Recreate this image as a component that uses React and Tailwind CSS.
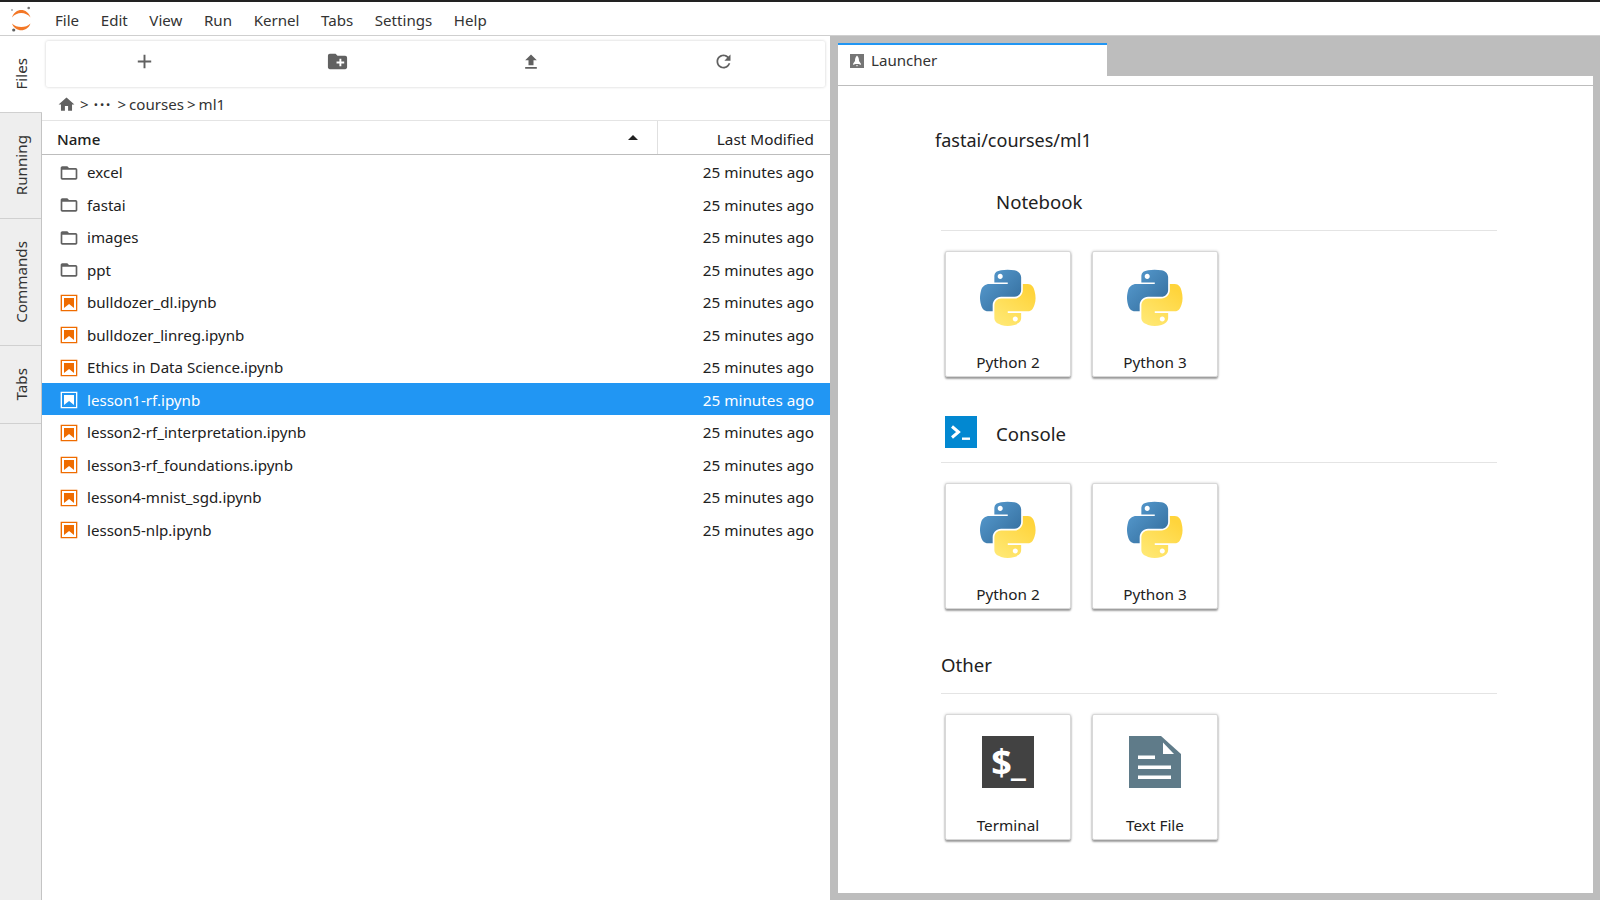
import { useId } from "react";

const folders = ["excel", "fastai", "images", "ppt"];
const notebooks = [
  "bulldozer_dl.ipynb",
  "bulldozer_linreg.ipynb",
  "Ethics in Data Science.ipynb",
  "lesson1-rf.ipynb",
  "lesson2-rf_interpretation.ipynb",
  "lesson3-rf_foundations.ipynb",
  "lesson4-mnist_sgd.ipynb",
  "lesson5-nlp.ipynb",
];

function Glyph({ d, className }) {
  return (
    <svg viewBox="0 0 24 24" className={className} fill="currentColor">
      <path d={d} />
    </svg>
  );
}

function FolderIcon() {
  return (
    <Glyph
      className="w-[20px] h-[20px] text-[#616161]"
      d="M20 6h-8l-2-2H4c-1.1 0-1.99.9-1.99 2L2 18c0 1.1.9 2 2 2h16c1.1 0 2-.9 2-2V8c0-1.1-.9-2-2-2zm0 12H4V8h16v10z"
    />
  );
}

function NotebookIcon({ selected }) {
  return (
    <svg viewBox="0 0 22 22" className="w-[20px] h-[20px]" fill={selected ? "#ffffff" : "#EF6C00"}>
      <path d="M18.7 3.3v15.4H3.3V3.3h15.4m1.5-1.5H1.8v18.3h18.3l.1-18.3z" />
      <path d="M16.5 16.5l-5.4-4.3-5.6 4.3v-11h11z" />
    </svg>
  );
}

function PythonIcon() {
  const id = useId();
  return (
    <svg viewBox="0 0 112 113" className="w-[56px] h-[58px]">
      <defs>
        <linearGradient id={id + "b"} x1="0" y1="0" x2="1" y2="1">
          <stop offset="0" stopColor="#5A9FD4" />
          <stop offset="1" stopColor="#306998" />
        </linearGradient>
        <linearGradient id={id + "y"} x1="0.2" y1="1" x2="0.8" y2="0.1">
          <stop offset="0" stopColor="#FFE873" />
          <stop offset="1" stopColor="#FFD43B" />
        </linearGradient>
      </defs>
      <path
        fill={`url(#${id}b)`}
        d="M54.918785,9.1927421e-4 C50.335132,0.02221727 45.957846,0.41313697 42.106285,1.0946693 C30.760069,3.0991731 28.700036,7.2947714 28.700035,15.032169 L28.700035,25.250919 L55.512535,25.250919 L55.512535,28.657169 L28.700035,28.657169 L18.637535,28.657169 C10.845187,28.657169 4.0217715,33.340702 1.8875353,42.250919 C-0.57424527,52.463655 -0.68204673,58.836362 1.8875353,69.500919 C3.7934572,77.438451 8.3450765,83.094669 16.137535,83.094669 L25.356285,83.094669 L25.356285,70.844669 C25.356285,61.994603 33.013429,54.188414 42.106285,54.188414 L68.887535,54.188414 C76.342298,54.188414 82.293783,48.050379 82.293785,40.563664 L82.293785,15.032169 C82.293785,7.7658669 76.163762,2.3073089 68.887535,1.0946693 C64.281548,0.32794397 59.502438,-0.02055893 54.918785,9.1927421e-4 z M40.418785,8.2196194 C43.188319,8.2196194 45.450035,10.518214 45.450035,13.344619 C45.450035,16.160962 43.188319,18.438369 40.418785,18.438369 C37.63923,18.438369 35.387535,16.160962 35.387535,13.344619 C35.387535,10.518214 37.63923,8.2196194 40.418785,8.2196194 z"
      />
      <path
        fill={`url(#${id}y)`}
        d="M85.637535,28.657169 L85.637535,40.563419 C85.637535,49.794016 77.811758,57.563419 68.887535,57.563419 L42.106285,57.563419 C34.770589,57.563419 28.700035,63.841866 28.700035,71.188419 L28.700035,96.719669 C28.700035,103.98597 35.018763,108.25994 42.106285,110.34467 C50.593331,112.84015 58.731102,113.29112 68.887535,110.34467 C75.63815,108.38952 82.293785,104.45499 82.293785,96.719669 L82.293785,86.500919 L55.512535,86.500919 L55.512535,83.094669 L82.293785,83.094669 L95.699785,83.094669 C103.49213,83.094669 106.39576,77.659386 109.10598,69.500919 C111.90547,61.102 111.78678,53.02 109.10598,42.250919 C107.17983,34.496 103.50126,28.657169 95.699785,28.657169 L85.637535,28.657169 z M70.575035,93.313419 C73.354589,93.313419 75.606285,95.590826 75.606285,98.407169 C75.606285,101.23357 73.354589,103.53217 70.575035,103.53217 C67.805501,103.53217 65.543785,101.23357 65.543785,98.407169 C65.543785,95.590826 67.805501,93.313419 70.575035,93.313419 z"
      />
    </svg>
  );
}

function TerminalIcon() {
  return (
    <div className="mt-[4px] w-[52px] h-[52px] bg-[#424242] flex items-center justify-center text-white font-bold text-[36px] leading-none tracking-[-1px] font-['Open_Sans',sans-serif]">
      $_
    </div>
  );
}

function TextFileIcon() {
  return (
    <svg viewBox="0 0 52 52" className="mt-[4px] w-[52px] h-[52px]">
      <path fill="#5f7b89" d="M0 0h32l20 18v34H0z" />
      <path fill="#ffffff" d="M34 6.5 L34 18 L45 18 z" />
      <path fill="#ffffff" d="M9 19.5h17v3.5H9zM9 29.5h33V33H9zM9 39.5h33V43H9z" />
    </svg>
  );
}

function Card({ label, children }) {
  return (
    <div className="w-[126px] h-[126px] bg-white rounded-[2px] border border-[#d8d8d8] shadow-[0_2px_2px_rgba(0,0,0,0.35),0_0_3px_rgba(0,0,0,0.2)] flex flex-col items-center">
      <div className="h-[83px] mt-[17px] flex justify-center">{children}</div>
      <div className="text-[15.3px] leading-5 text-[#212121]">{label}</div>
    </div>
  );
}

function Section({ title, icon, children }) {
  return (
    <div className="mb-[25.5px]">
      <div className="h-[60px] border-b border-[#e4e4e4] flex items-center">
        {icon ? <div className="ml-[4px] w-[51px]">{icon}</div> : null}
        {title === "Notebook" ? <div className="w-[55px]" /> : null}
        <span className="text-[18.6px] text-[#212121] mt-[3px]">{title}</span>
      </div>
      <div className="flex gap-[21px] pt-[20px] pl-[4px]">{children}</div>
    </div>
  );
}

function ConsoleIcon() {
  return (
    <svg viewBox="0 0 32 32" className="w-[32px] h-[32px]">
      <path fill="#0288D1" d="M0 0h32v32H0z" />
      <path fill="none" stroke="#ffffff" strokeWidth="3" d="M7 10.5 L13.5 16 L7 21.5" />
      <path fill="#ffffff" d="M17 21.5h8v2.4h-8z" />
    </svg>
  );
}

function SideTab({ label, active, className }) {
  return (
    <div
      className={
        "flex items-center justify-center pl-[1px] border-b border-[#d0d0d0] " +
        (active ? "bg-white w-[42px] " : "bg-[#eeeeee] w-[41px] ") +
        className
      }
    >
      <span className="[writing-mode:vertical-rl] rotate-180 text-[15.2px] text-[#333]">{label}</span>
    </div>
  );
}

function FileRow({ name, selected, icon }) {
  return (
    <div
      className={
        "h-[32.5px] flex items-center pt-[3px] pr-[16px] text-[15.1px] " +
        (selected ? "bg-[#2196f3] text-white" : "text-[#212121]")
      }
    >
      <div className="w-[45px] pl-[17px] flex items-center">{icon}</div>
      <span className="flex-1">{name}</span>
      <span className="text-[15.3px]">25 minutes ago</span>
    </div>
  );
}

export default function App() {
  return (
    <div className="h-screen w-full overflow-hidden flex flex-col bg-white border-t-2 border-[#222] font-['Noto_Sans',sans-serif]">
      {/* menu */}
      <div className="h-[34px] shrink-0 flex items-center pt-[3px] border-b border-[#cfcfcf] text-[15.1px] text-[#333]">
        <div className="w-[41px] mr-[14px] flex justify-center">
          <svg viewBox="0 0 24 28" className="w-[24px] h-[28px]">
            <path fill="#F37726" d="M3 11.5 C6 1.5 18.5 1.5 21.5 11.5 C17 5.5 7.5 5.5 3 11.5 z" />
            <path fill="#F37726" d="M3 17.5 C6 26.5 18.5 26.5 21.5 17.5 C17 22.2 7.5 22.2 3 17.5 z" />
            <circle cx="19.7" cy="2" r="1.3" fill="#767677" />
            <circle cx="3" cy="4" r="0.9" fill="#9e9e9e" />
            <circle cx="4.7" cy="24" r="1.6" fill="#616262" />
          </svg>
        </div>
        <div className="flex gap-[21.6px]">
          {["File", "Edit", "View", "Run", "Kernel", "Tabs", "Settings", "Help"].map((m) => (
            <span key={m}>{m}</span>
          ))}
        </div>
      </div>

      <div className="flex-1 flex min-h-0">
        {/* left tabs */}
        <div className="w-[42px] shrink-0 bg-[#eeeeee] border-r border-[#c4c4c4] flex flex-col">
          <SideTab label="Files" active className="h-[77px]" />
          <SideTab label="Running" className="h-[106px]" />
          <SideTab label="Commands" className="h-[127px]" />
          <SideTab label="Tabs" className="h-[78px]" />
        </div>

        {/* file browser */}
        <div className="w-[788px] shrink-0 flex flex-col bg-white">
          <div className="h-[46px] mt-[5px] ml-[4px] mr-[5px] pl-[2px] pb-[5px] flex items-center bg-white rounded-[2px] shadow-[0_0_3px_rgba(0,0,0,0.2)] text-[#616161]">
            <div className="w-[193px] flex justify-center">
              <Glyph className="w-[23px] h-[23px]" d="M19 13h-6v6h-2v-6H5v-2h6V5h2v6h6v2z" />
            </div>
            <div className="w-[193px] flex justify-center">
              <Glyph
                className="w-[23px] h-[23px]"
                d="M20 6h-8l-2-2H4c-1.11 0-1.99.89-1.99 2L2 18c0 1.11.89 2 2 2h16c1.11 0 2-.89 2-2V8c0-1.11-.89-2-2-2zm-1 8h-3v3h-2v-3h-3v-2h3V9h2v3h3v2z"
              />
            </div>
            <div className="w-[193px] flex justify-center">
              <Glyph className="w-[20px] h-[20px]" d="M9 16h6v-6h4l-7-7-7 7h4zm-4 2h14v2H5z" />
            </div>
            <div className="w-[193px] flex justify-center">
              <Glyph
                className="w-[21px] h-[21px]"
                d="M17.65 6.35C16.2 4.9 14.21 4 12 4c-4.42 0-7.99 3.58-7.99 8s3.57 8 7.99 8c3.73 0 6.84-2.55 7.73-6h-2.08c-.82 2.33-3.04 4-5.65 4-3.31 0-6-2.69-6-6s2.69-6 6-6c1.66 0 3.14.69 4.22 1.78L13 11h7V4l-2.35 2.35z"
              />
            </div>
          </div>

          <div className="h-[34px] flex items-center pl-[15px] pt-[2px] border-b border-[#e4e4e4] text-[15.1px] text-[#333]">
            <Glyph className="w-[19px] h-[19px] text-[#616161]" d="M10 20v-6h4v6h5v-8h3L12 3 2 12h3v8z" />
            <span className="ml-[4px]">&gt;</span>
            <span className="ml-[5px] font-bold tracking-[2px]">···</span>
            <span className="ml-[5px]">&gt;</span>
            <span className="ml-[3px]">courses</span>
            <span className="ml-[3px]">&gt;</span>
            <span className="ml-[3px]">ml1</span>
          </div>

          <div className="h-[34px] flex border-b border-[#bdbdbd] text-[15.1px] text-[#212121]">
            <div className="w-[616px] pl-[15px] flex items-center justify-between pr-[19px] border-r border-[#e0e0e0]">
              <span className="font-medium pt-[3px]">Name</span>
              <span className="w-0 h-0 border-x-[5px] border-x-transparent border-b-[5px] border-b-[#212121]" />
            </div>
            <div className="flex-1 flex items-center justify-end pt-[3px] pr-[16px] text-[15.3px]">Last Modified</div>
          </div>

          <div>
            {folders.map((f) => (
              <FileRow key={f} name={f} icon={<FolderIcon />} />
            ))}
            {notebooks.map((n) => (
              <FileRow
                key={n}
                name={n}
                selected={n === "lesson1-rf.ipynb"}
                icon={<NotebookIcon selected={n === "lesson1-rf.ipynb"} />}
              />
            ))}
          </div>
        </div>

        {/* launcher */}
        <div className="flex-1 flex flex-col min-w-0 bg-[#bdbdbd] pl-[8px] pr-[7px] pb-[7px]">
          <div className="h-[40px] shrink-0 pt-[7px]">
            <div className="w-[269px] h-[33px] bg-white border-t-2 border-[#2196f3] flex items-center pl-[12px] text-[15.1px] text-[#333]">
              <svg viewBox="0 0 14 14" className="w-[14px] h-[14px] mr-[7px]">
                <path fill="#757575" d="M0 0h14v14H0z" />
                <path
                  fill="#ffffff"
                  d="M7 1.5 C8.6 3 9 5 9 7 L10.8 9.4 V11 L8.8 10 H5.2 L3.2 11 V9.4 L5 7 C5 5 5.4 3 7 1.5 z M6.2 11 H7.8 L7 12.8 z"
                />
              </svg>
              Launcher
            </div>
          </div>
          <div className="flex-1 bg-white min-h-0">
            <div className="h-[10px] border-b border-[#bdbdbd]" />
            <div className="pl-[103px] w-[659px]">
              <div className="pt-[40px] h-[85px]">
                <div className="-ml-[6px] text-[18px] leading-7 text-[#212121]">fastai/courses/ml1</div>
              </div>
              <Section title="Notebook">
                <Card label="Python 2"><PythonIcon /></Card>
                <Card label="Python 3"><PythonIcon /></Card>
              </Section>
              <Section title="Console" icon={<ConsoleIcon />}>
                <Card label="Python 2"><PythonIcon /></Card>
                <Card label="Python 3"><PythonIcon /></Card>
              </Section>
              <Section title="Other">
                <Card label="Terminal"><TerminalIcon /></Card>
                <Card label="Text File"><TextFileIcon /></Card>
              </Section>
            </div>
          </div>
        </div>
      </div>
    </div>
  );
}
